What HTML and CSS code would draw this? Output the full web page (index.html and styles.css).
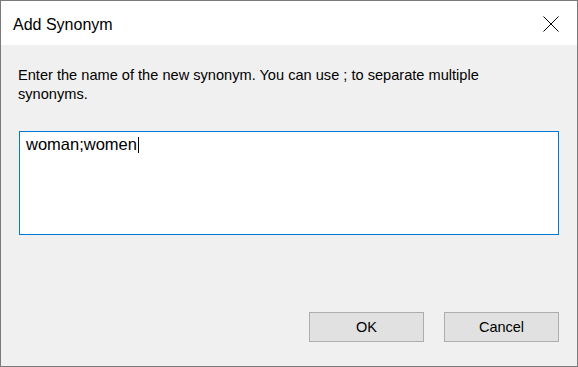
FILE: index.html
```html
<!DOCTYPE html>
<html lang="en">

<head>
    <meta charset="UTF-8">
    <meta name="viewport" content="width=device-width, initial-scale=1.0">
    <title>Add Synonym</title>
    <link rel="stylesheet" href="styles.css">
</head>

<body>
    <div class="window">
        <!-- 标题栏 -->
        <div class="titlebar">
            <span class="title">Add Synonym</span>
            <svg class="close" width="16" height="16" viewBox="0 0 16 16">
                <path d="M0.5 0.5 L15.5 15.5 M15.5 0.5 L0.5 15.5" stroke="#000" stroke-width="1" fill="none" />
            </svg>
        </div>
        <div class="content">
            <p class="label">Enter the name of the new synonym. You can use ; to separate multiple synonyms.</p>
            <div class="input">woman;women<span class="caret"></span></div>
            <div class="buttons">
                <button class="btn">OK</button>
                <button class="btn">Cancel</button>
            </div>
        </div>
    </div>
</body>

</html>
```

FILE: styles.css
```css
body {
    margin: 0;
    padding: 0;
    background-color: #f0f0f0;
    font-family: "Liberation Sans", Arial, sans-serif;
    color: #000;
}

.window {
    width: 576px;
    height: 365px;
    border: 1px solid #7a7a7a;
    display: flex;
    flex-direction: column;
}

.titlebar {
    height: 44px;
    background-color: #fff;
    display: flex;
    justify-content: space-between;
    align-items: flex-start;
    padding: 0 18px 0 12px;
}

.title {
    font-size: 16px;
    line-height: 18px;
    margin-top: 15px;
}

.close {
    margin-top: 15px;
    display: block;
}

.content {
    flex: 1;
    display: flex;
    flex-direction: column;
    padding: 21px 18px 24px 18px;
    background-color: #f0f0f0;
}

.label {
    margin: 0 0 0 -1px;
    width: 500px;
    font-size: 14.6px;
    line-height: 19px;
}

.input {
    margin-top: 27px;
    border: 1px solid #0078d7;
    background-color: #fff;
    padding: 3px 6px;
    box-sizing: border-box;
    height: 104px;
    font-size: 16.5px;
    line-height: 18px;
}

.caret {
    display: inline-block;
    width: 1px;
    height: 16px;
    margin-left: 1px;
    background-color: #000;
    vertical-align: -3px;
}

.buttons {
    margin-top: auto;
    display: flex;
    justify-content: flex-end;
    gap: 20px;
}

.btn {
    width: 115px;
    height: 30px;
    border: 1px solid #adadad;
    background-color: #e1e1e1;
    font-family: "Liberation Sans", Arial, sans-serif;
    font-size: 14.5px;
    color: #000;
    padding: 0;
}
```
